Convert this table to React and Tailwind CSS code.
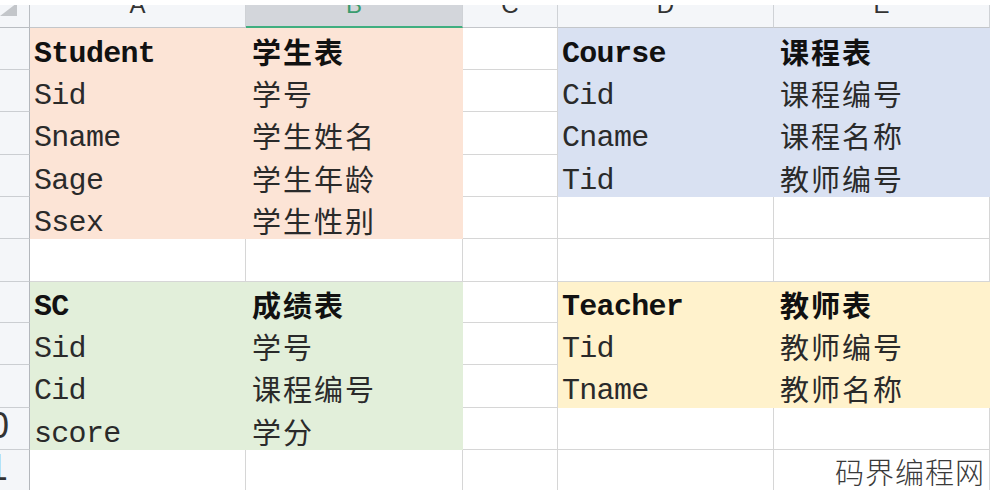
import React from 'react';

const fills = {
    pink: 'bg-[#fce4d6]',
    blue: 'bg-[#d9e1f2]',
    green: 'bg-[#e2efda]',
    yellow: 'bg-[#fff2cc]',
};

const colWidths = ['w-[216px]', 'w-[217px]', 'w-[95px]', 'w-[216px]', 'flex-1'];

// [A, B, C, D, E] — each cell: [text, fill, bold]
const rows = [
    { h: 'h-[42px]', cells: [['Student', 'pink', true], ['学生表', 'pink', true], null, ['Course', 'blue', true], ['课程表', 'blue', true]] },
    { h: 'h-[42px]', cells: [['Sid', 'pink'], ['学号', 'pink'], null, ['Cid', 'blue'], ['课程编号', 'blue']] },
    { h: 'h-[43px]', cells: [['Sname', 'pink'], ['学生姓名', 'pink'], null, ['Cname', 'blue'], ['课程名称', 'blue']] },
    { h: 'h-[42px]', cells: [['Sage', 'pink'], ['学生年龄', 'pink'], null, ['Tid', 'blue'], ['教师编号', 'blue']] },
    { h: 'h-[42px]', cells: [['Ssex', 'pink'], ['学生性别', 'pink'], null, null, null] },
    { h: 'h-[43px]', cells: [null, null, null, null, null] },
    { h: 'h-[41px]', cells: [['SC', 'green', true], ['成绩表', 'green', true], null, ['Teacher', 'yellow', true], ['教师表', 'yellow', true]] },
    { h: 'h-[42px]', cells: [['Sid', 'green'], ['学号', 'green'], null, ['Tid', 'yellow'], ['教师编号', 'yellow']] },
    { h: 'h-[43px]', cells: [['Cid', 'green'], ['课程编号', 'green'], null, ['Tname', 'yellow'], ['教师名称', 'yellow']] },
    { h: 'h-[42px]', cells: [['score', 'green'], ['学分', 'green'], null, null, null] },
    { h: 'h-[42px]', cells: [null, null, null, null, null] },
];

const latin = "font-['Liberation_Mono',monospace] text-[30px] tracking-[-0.7px] pl-[4px] pt-[9px]";
const cjk = "font-['Noto_Sans_CJK_SC',sans-serif] text-[29px] tracking-[2px] pl-[6px] pt-[4px]";

function Cell({ cell, col }) {
    const isCjk = col === 1 || col === 4;
    const base = `${colWidths[col]} shrink-0 flex items-center overflow-hidden whitespace-nowrap`;
    if (!cell) {
        return <div className={`${base} border-r border-b border-[#d6d6d6]`}></div>;
    }
    const [text, fill, bold] = cell;
    return (
        <div className={`${base} ${fills[fill]} ${isCjk ? cjk : latin}`}>
            <span className={`${bold ? 'font-bold text-[#111]' : 'text-[#2a2a2a]'} leading-none`}>
                {text}
            </span>
        </div>
    );
}

export default function App() {
    const letters = ['A', 'B', 'C', 'D', 'E'];

    return (
        <div className="relative w-[990px] h-[490px] overflow-hidden bg-white">
            {/* top strip */}
            <div className="h-[5px] bg-white"></div>

            {/* column headers */}
            <div className="flex h-[23px] font-['Liberation_Sans',sans-serif]">
                <div className="w-[30px] shrink-0 relative overflow-hidden bg-[#f4f6f9] border-r border-b border-[#b9bdc2]">
                    <svg width="18" height="14" viewBox="0 0 18 14" className="absolute left-0 top-0">
                        <polygon points="0,11 17,11 17,-2" fill="#c3c6ca" />
                    </svg>
                </div>
                {letters.map((l, i) => (
                    <div
                        key={l}
                        className={`${colWidths[i]} shrink-0 overflow-hidden flex justify-center border-r border-[#cfd2d6] ${i === 1
                            ? 'bg-[#d3d6db] border-b-2 border-b-[#3fae7f] text-[#3a9c6e]'
                            : 'bg-[#f4f6f9] border-b border-b-[#c3c6ca] text-[#333]'
                            }`}
                    >
                        <span className="text-[24px] leading-[24px] mt-[-12px]">{l}</span>
                    </div>
                ))}
            </div>

            {/* grid rows */}
            {rows.map((row, r) => (
                <div key={r} className={`flex ${row.h}`}>
                    <div className="w-[30px] shrink-0 flex overflow-hidden bg-[#f4f6f9] border-r border-b border-r-[#b3b7bc] border-b-[#cbced2]">
                        <div className="w-[50px] shrink-0 ml-[-36px] text-center font-['Liberation_Sans',sans-serif] text-[36px] leading-[36px] text-[#333]">
                            {r + 1}
                        </div>
                    </div>
                    {row.cells.map((cell, c) => (
                        <Cell key={c} cell={cell} col={c} />
                    ))}
                </div>
            ))}

            {/* watermark */}
            <div className="absolute right-[5px] bottom-[4px] font-['Noto_Sans_CJK_SC',sans-serif] text-[29px] leading-none tracking-[1px] text-[#3a3a3a] font-light">
                码界编程网
            </div>
        </div>
    );
}
